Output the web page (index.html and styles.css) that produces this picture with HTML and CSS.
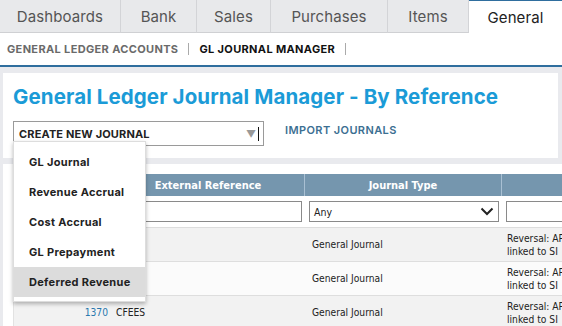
FILE: index.html
```html
<!DOCTYPE html>
<html>
<head>
<meta charset="utf-8">
<link rel="stylesheet" href="styles.css">
</head>
<body>
<div class="tabs">
  <div class="tab">Dashboards</div>
  <div class="tab">Bank</div>
  <div class="tab">Sales</div>
  <div class="tab">Purchases</div>
  <div class="tab">Items</div>
  <div class="tab active">General</div>
</div>
<div class="subnav">
  <span class="sublink">GENERAL LEDGER ACCOUNTS</span>
  <span class="sep"></span>
  <span class="sublink current">GL JOURNAL MANAGER</span>
  <span class="sep"></span>
</div>
<div class="main">
  <div class="card head">
    <h1 class="title">General Ledger Journal Manager - By Reference</h1>
    <div class="actions">
      <div class="picker">
        <div class="select">
          <span class="select-label">CREATE NEW JOURNAL</span>
          <span class="tri">&#9660;</span><span class="caret"></span>
        </div>
        <div class="menu">
          <div class="item">GL Journal</div>
          <div class="item">Revenue Accrual</div>
          <div class="item">Cost Accrual</div>
          <div class="item">GL Prepayment</div>
          <div class="item hover">Deferred Revenue</div>
        </div>
      </div>
      <span class="import">IMPORT JOURNALS</span>
    </div>
  </div>
  <div class="card list">
    <div class="grid">
      <div class="row hdr">
        <div class="c c1"></div>
        <div class="c c2">External Reference</div>
        <div class="c c3">Journal Type</div>
        <div class="c c4"></div>
      </div>
      <div class="row filters">
        <div class="c c1"><span class="inp"></span></div>
        <div class="c c2"><span class="inp"></span></div>
        <div class="c c3"><span class="inp sel">Any<svg class="chev" width="14" height="9" viewBox="0 0 14 9"><polyline points="1.5,1.5 7,7 12.5,1.5" fill="none" stroke="#222" stroke-width="2"/></svg></span></div>
        <div class="c c4"><span class="inp"></span></div>
      </div>
      <div class="row data odd">
        <div class="c c1 num"></div>
        <div class="c c2"></div>
        <div class="c c3">General Journal</div>
        <div class="c c4 desc">Reversal: AP<br>linked to SI</div>
      </div>
      <div class="row data even">
        <div class="c c1 num"></div>
        <div class="c c2"></div>
        <div class="c c3">General Journal</div>
        <div class="c c4 desc">Reversal: AP<br>linked to SI</div>
      </div>
      <div class="row data odd">
        <div class="c c1 num">1370</div>
        <div class="c c2">CFEES</div>
        <div class="c c3">General Journal</div>
        <div class="c c4 desc">Reversal: AP<br>linked to SI</div>
      </div>
    </div>
  </div>
</div>
</body>
</html>
```
FILE: styles.css
```css
* { box-sizing: border-box; }
html, body { margin: 0; padding: 0; }
body {
  width: 562px;
  height: 326px;
  overflow: hidden;
  background: #e9eaee;
  font-family: Inter, "Open Sans", sans-serif;
}
.tabs {
  display: grid;
  grid-template-columns: 121px 76px 74px 117px 81px 1fr;
  height: 33px;
  background: #e8e9eb;
}
.tab {
  display: flex;
  align-items: center;
  justify-content: center;
  font-size: 15px;
  color: #555;
  border-right: 1px solid #d3d4d7;
  border-bottom: 1px solid #cfd0d3;
  letter-spacing: 0.1px;
}
.tab.active {
  background: #fff;
  color: #222;
  border-right: none;
  border-bottom: none;
  border-top: 1px solid #2f6e9e;
}
.subnav {
  display: flex;
  align-items: center;
  height: 34px;
  padding-left: 7px;
  background: #fff;
  border-bottom: 2px solid #2f6e9e;
}
.sublink {
  font-size: 11px;
  font-weight: 700;
  color: #6a6a6a;
  letter-spacing: 0.35px;
}
.sublink.current { color: #111; }
.sep {
  width: 1px;
  height: 12px;
  background: #aaa;
  margin: 0 10px;
}
.main { padding: 6px 4px 0 3px; }
.card { background: #fff; }
.head {
  height: 85px;
  padding: 11px 10px 0 10px;
}
.title {
  margin: 0;
  font-size: 20.5px;
  line-height: 26px;
  font-weight: 700;
  color: #1b9bd7;
  letter-spacing: 0.1px;
  white-space: nowrap;
}
.actions {
  display: flex;
  align-items: center;
  margin-top: 11px;
}
.picker { position: relative; }
.select {
  width: 251px;
  height: 25px;
  border: 1px solid #9a9a9a;
  display: flex;
  align-items: center;
  padding-left: 5px;
  padding-right: 4px;
}
.select-label {
  font-size: 11px;
  font-weight: 700;
  color: #222;
  flex: 1;
  letter-spacing: 0.15px;
}
.tri { font-size: 10px; color: #999; margin-right: 2px; }
.caret { width: 1px; height: 14px; background: #111; }
.menu {
  position: absolute;
  top: 20px;
  left: 0;
  width: 133px;
  padding: 5px 0 4px;
  background: #fff;
  border: 1px solid #ddd;
  box-shadow: 0 2px 4px rgba(0, 0, 0, 0.28);
  z-index: 5;
}
.item {
  height: 30px;
  display: flex;
  align-items: center;
  padding-left: 15px;
  font-size: 11px;
  font-weight: 700;
  color: #222;
  letter-spacing: 0.3px;
}
.item.hover { background: #dcdcdc; }
.import {
  margin-left: 21px;
  font-size: 11px;
  font-weight: 600;
  color: #3c6f92;
  margin-top: -7px;
  letter-spacing: 0.4px;
}
.list {
  margin-top: 6px;
  margin-right: -40px;
  height: 200px;
  padding: 10px 0 0 10px;
}
.grid {
  font-family: "DejaVu Sans Condensed", "Liberation Sans", sans-serif;
  font-size: 10.2px;
  color: #222;
}
.row {
  display: grid;
  grid-template-columns: 99px 193px 197px 110px;
}
.hdr {
  height: 22px;
  background: #7596ae;
  color: #fff;
  font-weight: 700;
  font-size: 11px;
}
.hdr .c {
  display: flex;
  align-items: center;
  justify-content: center;
  border-right: 1px solid #a9c0d3;
}
.filters {
  height: 32px;
  background: #fff;
  border-bottom: 1px solid #ddd;
}
.filters .c {
  display: flex;
  align-items: center;
  padding: 0 3px 0 4px;
}
.inp {
  display: flex;
  align-items: center;
  width: 100%;
  height: 21px;
  border: 1px solid #8a8a8a;
  background: #fff;
}
.inp.sel {
  padding: 0 4px 0 4px;
  justify-content: space-between;
  font-size: 10.5px;
}
.data {
  height: 34px;
  border-bottom: 1px solid #dedede;
  border-left: 1px solid #e2e2e2;
}
.data.odd { background: #f2f2f2; }
.data.even { background: #fbfbfb; }
.data .c {
  display: flex;
  align-items: center;
  white-space: nowrap;
  overflow: hidden;
}
.data .c1 { justify-content: flex-end; padding-right: 5px; color: #2a78ad; }
.data .c2 { padding-left: 3px; }
.data .c3 { padding-left: 6px; }
.data .c4 { padding-left: 4px; line-height: 13px; }
```
